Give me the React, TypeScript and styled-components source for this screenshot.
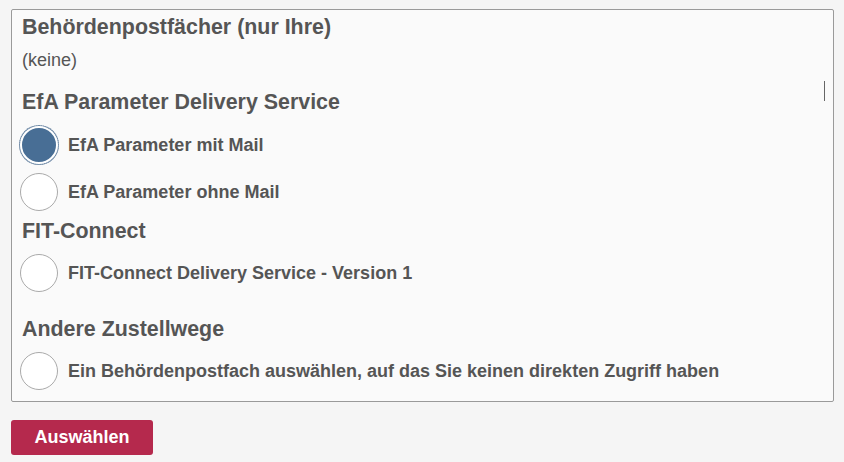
import * as React from 'react';
import styled, { createGlobalStyle } from 'styled-components';

const GlobalStyle = createGlobalStyle`
  html, body {
    margin: 0;
    padding: 0;
    background: #f5f5f5;
    font-family: 'Liberation Sans', Arial, sans-serif;
    color: #555;
  }
`;

const Page = styled.div`
  padding: 9px 10px 0 11px;
`;

const Panel = styled.div`
  position: relative;
  border: 1px solid #9a9a9a;
  border-radius: 2px;
  background: #fafafa;
  padding: 5px 10px 11px 8px;
  display: flex;
  flex-direction: column;
  align-items: flex-start;
`;

const Heading = styled.h3<{ gap: number }>`
  margin: ${p => p.gap}px 0 0 2px;
  font-size: 21.4px;
  line-height: 24px;
  font-weight: bold;
  color: #555;
`;

const Empty = styled.p`
  margin: 11px 0 0 2px;
  font-size: 18px;
  line-height: 20px;
`;

const Option = styled.label<{ gap: number }>`
  display: flex;
  align-items: center;
  gap: 10px;
  margin-top: ${p => p.gap}px;
  cursor: pointer;
  font-size: 18px;
  font-weight: bold;
  color: #555;
`;

const Radio = styled.span<{ checked: boolean }>`
  width: 36px;
  height: 36px;
  border-radius: 50%;
  border: 1px solid #aaa;
  background: #fff;
  flex: 0 0 auto;
  box-sizing: content-box;
  ${p =>
    p.checked &&
    `
    width: 34px;
    height: 34px;
    border: 2px solid #fff;
    background: #486e95;
    outline: 1px dotted #6d87a3;
    outline-offset: 0;
    box-shadow: 0 0 0 1px #8aa0b8;
  `}
`;

const Caret = styled.span`
  position: absolute;
  right: 8px;
  top: 71px;
  width: 1px;
  height: 20px;
  background: #666;
`;

const SubmitButton = styled.button`
  margin-top: 18px;
  width: 142px;
  height: 35px;
  border: none;
  border-radius: 3px;
  background: #b5294d;
  color: #fff;
  font-family: 'Liberation Sans', Arial, sans-serif;
  font-size: 18px;
  font-weight: bold;
  cursor: pointer;
`;

const App: React.FC = () => {
  const [selected, setSelected] = React.useState('efa-mail');

  const options = (id: string, label: string, gap: number) => (
    <Option gap={gap} onClick={() => setSelected(id)}>
      <Radio checked={selected === id} />
      {label}
    </Option>
  );

  return (
    <>
      <GlobalStyle />
      <Page>
        <Panel>
          <Caret />
          <Heading gap={0}>Behördenpostfächer (nur Ihre)</Heading>
          <Empty>(keine)</Empty>
          <Heading gap={20}>EfA Parameter Delivery Service</Heading>
          {options('efa-mail', 'EfA Parameter mit Mail', 12)}
          {options('efa-nomail', 'EfA Parameter ohne Mail', 9)}
          <Heading gap={8}>FIT-Connect</Heading>
          {options('fit', 'FIT-Connect Delivery Service - Version 1', 11)}
          <Heading gap={25}>Andere Zustellwege</Heading>
          {options('other', 'Ein Behördenpostfach auswählen, auf das Sie keinen direkten Zugriff haben', 11)}
        </Panel>
        <SubmitButton>Auswählen</SubmitButton>
      </Page>
    </>
  );
};

export default App;
